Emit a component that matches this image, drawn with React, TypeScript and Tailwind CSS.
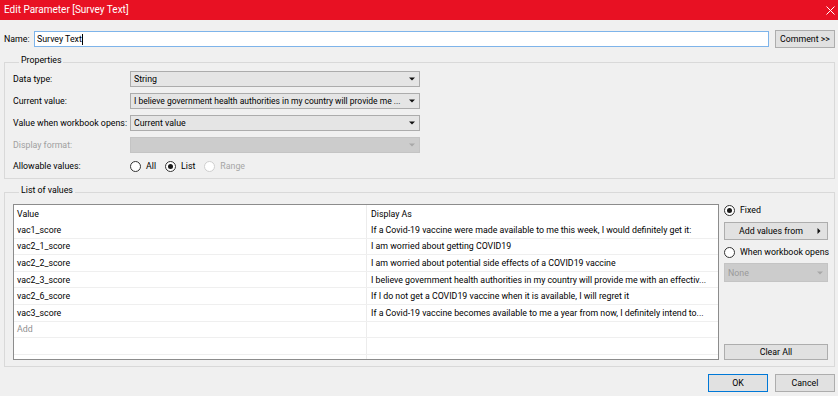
import React from 'react';

const rows = [
  { value: 'vac1_score', display: 'If a Covid-19 vaccine were made available to me this week, I would definitely get it:' },
  { value: 'vac2_1_score', display: 'I am worried about getting COVID19' },
  { value: 'vac2_2_score', display: 'I am worried about potential side effects of a COVID19 vaccine' },
  { value: 'vac2_3_score', display: 'I believe government health authorities in my country will provide me with an effectiv...' },
  { value: 'vac2_6_score', display: 'If I do not get a COVID19 vaccine when it is available, I will regret it' },
  { value: 'vac3_score', display: 'If a Covid-19 vaccine becomes available to me a year from now, I definitely intend to...' },
];

function Arrow({ disabled }: { disabled?: boolean }) {
  return (
    <svg width="6" height="4" viewBox="0 0 6 4" className="shrink-0">
      <path d="M0 0.5 L6 0.5 L3 3.5 Z" fill={disabled ? '#a8a8a8' : '#111'} />
    </svg>
  );
}

function Select({ text, disabled, small }: { text: string; disabled?: boolean; small?: boolean }) {
  return (
    <div
      className={`h-[16px] flex items-center justify-between pl-[3px] pr-[4px] border ${
        disabled ? 'bg-[#cccccc] border-[#c4c4c4] text-[#8c8c8c]' : 'bg-[#e5e5e5] border-[#acacac] text-black'
      }`}
    >
      <span className={`whitespace-nowrap overflow-hidden ${small ? 'text-[8.5px]' : ''}`}>{text}</span>
      <Arrow disabled={disabled} />
    </div>
  );
}

function Radio({ label, checked, disabled }: { label: string; checked?: boolean; disabled?: boolean }) {
  return (
    <div className={`flex items-center gap-[5px] ${disabled ? 'text-[#a6a6a6]' : 'text-black'}`}>
      <span
        className={`w-[11px] h-[11px] rounded-full border bg-white flex items-center justify-center ${
          disabled ? 'border-[#cfcfcf]' : 'border-[#333333]'
        }`}
      >
        {checked && <span className="w-[5px] h-[5px] rounded-full bg-[#1a1a1a]" />}
      </span>
      <span>{label}</span>
    </div>
  );
}

function Button({ children, primary, className = '' }: { children: React.ReactNode; primary?: boolean; className?: string }) {
  return (
    <button
      className={`bg-[#e1e1e1] border flex items-center justify-center text-black ${
        primary ? 'border-[#0078d7]' : 'border-[#adadad]'
      } ${className}`}
    >
      {children}
    </button>
  );
}

export default function App() {
  return (
    <div className="w-[838px] h-[396px] overflow-hidden bg-[#f0f0f0] font-['Roboto','Liberation_Sans',sans-serif] text-[8.8px] leading-[12px] text-black flex flex-col">
      {/* Title bar */}
      <div className="h-[20px] shrink-0 bg-[#e81123] flex items-center justify-between pl-[4px] pr-[3px] text-white">
        <span className="text-[10px]">Edit Parameter [Survey Text]</span>
        <svg width="9" height="9" viewBox="0 0 9 9">
          <path d="M0.5 0.5 L8.5 8.5 M8.5 0.5 L0.5 8.5" stroke="#fff" strokeWidth="1" />
        </svg>
      </div>

      <div className="pl-[4px] pr-[3px] flex flex-col">
        {/* Name */}
        <div className="mt-[10px] h-[18px] flex items-center">
          <span className="w-[30px]">Name:</span>
          <div className="flex-1 h-[16px] bg-white border border-[#7eb4ea] flex items-center pl-[2px]">
            Survey Text<span className="w-px h-[11px] bg-black" />
          </div>
          <Button className="ml-[6px] w-[60px] h-[18px]">Comment &gt;&gt;</Button>
        </div>

        {/* Properties */}
        <fieldset className="mt-[7px] border border-[#d9d9d9] pl-[8px] pt-[2px] pb-[6px]">
          <legend className="ml-[6px] px-[2px] leading-[10px] pb-[4px]">Properties</legend>
          <div className="grid grid-cols-[117px_290px] gap-y-[6px] items-center">
            <span>Data type:</span>
            <Select text="String" />
            <span>Current value:</span>
            <Select small text="I believe government health authorities in my country will provide me ..." />
            <span>Value when workbook opens:</span>
            <Select text="Current value" />
            <span className="text-[#a0a0a0]">Display format:</span>
            <Select text="" disabled />
            <span>Allowable values:</span>
            <div className="flex items-center gap-[9px] h-[12px] mt-[1px]">
              <Radio label="All" />
              <Radio label="List" checked />
              <Radio label="Range" disabled />
            </div>
          </div>
        </fieldset>

        {/* List of values */}
        <fieldset className="mt-[6px] border border-[#d9d9d9] pl-[8px] pt-[5px] pb-[6px] pr-[5px]">
          <legend className="ml-[6px] px-[2px] leading-[10px] pb-[4px]">List of values</legend>
          <div className="flex h-[156px] gap-[5px]">
            <div className="w-[706px] border border-[#8c8c8c] bg-white flex flex-col">
              <div className="h-[17px] flex shrink-0">
                <div className="w-[352px] pl-[3px] flex items-center">Value</div>
                <div className="flex-1 pl-[4px] flex items-center border-l border-[#ececec]">Display As</div>
              </div>
              {rows.map((r) => (
                <div key={r.value} className="h-[16.6px] flex shrink-0 border-b border-[#efefef]">
                  <div className="w-[352px] pl-[3px] flex items-center whitespace-nowrap">{r.value}</div>
                  <div className="flex-1 pl-[4px] flex items-center border-l border-[#ececec] whitespace-nowrap overflow-hidden">
                    {r.display}
                  </div>
                </div>
              ))}
              <div className="h-[16.6px] flex shrink-0 border-b border-[#efefef]">
                <div className="w-[352px] pl-[3px] flex items-center text-[#8f8f8f]">Add</div>
                <div className="flex-1 border-l border-[#ececec]" />
              </div>
              <div className="h-[16.6px] flex shrink-0 border-b border-[#efefef]">
                <div className="w-[352px]" />
                <div className="flex-1 border-l border-[#ececec]" />
              </div>
              <div className="flex-1 flex">
                <div className="w-[352px]" />
                <div className="flex-1 border-l border-[#ececec]" />
              </div>
            </div>

            <div className="w-[104px] flex flex-col">
              <div className="h-[12px] flex items-center">
                <Radio label="Fixed" checked />
              </div>
              <Button className="mt-[6px] h-[18px] w-full relative">
                <span className="pr-[10px]">Add values from</span>
                <svg width="4" height="6" viewBox="0 0 4 6" className="absolute right-[6px] top-[5px]">
                  <path d="M0.5 0 L3.5 3 L0.5 6 Z" fill="#111" />
                </svg>
              </Button>
              <div className="mt-[6px] h-[12px] flex items-center whitespace-nowrap">
                <Radio label="When workbook opens" />
              </div>
              <div className="mt-[5px] h-[19px] bg-[#cccccc] border border-[#c4c4c4] flex items-center justify-between pl-[3px] pr-[4px] text-[#9a9a9a]">
                <span>None</span>
                <Arrow disabled />
              </div>
              <Button className="mt-auto h-[16px] w-full">Clear All</Button>
            </div>
          </div>
        </fieldset>

        {/* Footer */}
        <div className="mt-[7px] flex justify-end gap-[7px]">
          <Button primary className="w-[60px] h-[18px]">OK</Button>
          <Button className="w-[60px] h-[18px]">Cancel</Button>
        </div>
      </div>
    </div>
  );
}
